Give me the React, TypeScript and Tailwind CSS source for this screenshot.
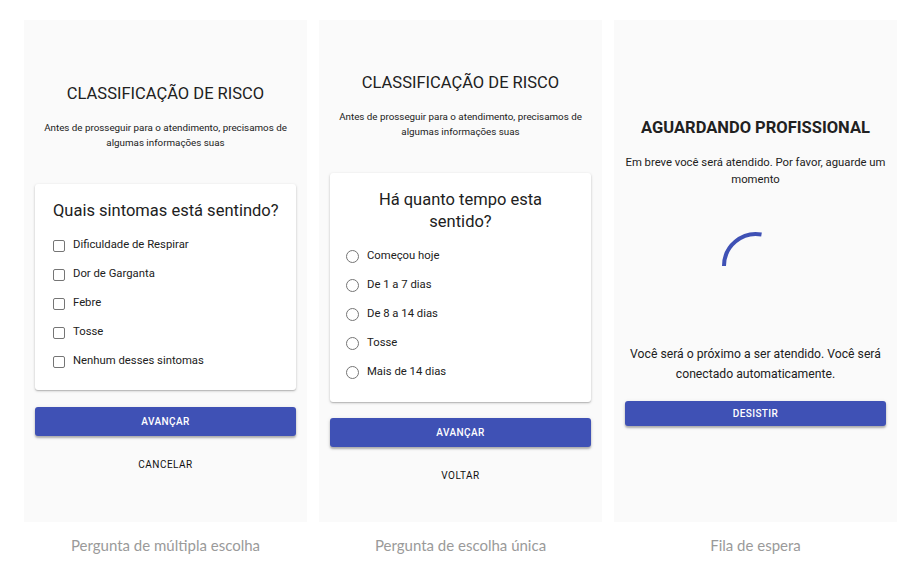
import React from "react";

const roboto = { fontFamily: "Roboto, 'Liberation Sans', sans-serif" };

function Checkbox() {
  return <span className="w-3 h-3 rounded-[2px] border-[1.5px] border-[#757575] shrink-0" />;
}

function Radio() {
  return <span className="w-[13px] h-[13px] rounded-full border-[1.5px] border-[#757575] shrink-0" />;
}

function Option({ label, kind }: { label: string; kind: "check" | "radio" }) {
  return (
    <div className="h-[29px] flex items-center gap-[8px]">
      {kind === "check" ? <Checkbox /> : <Radio />}
      <span className="text-[11.3px] text-[#212121]">{label}</span>
    </div>
  );
}

function Header() {
  return (
    <>
      <h1 className="text-[16.5px] leading-5 text-[#212121] text-center">
        CLASSIFICAÇÃO DE RISCO
      </h1>
      <p className="mt-[16px] text-[9.8px] leading-[15px] text-[#212121] text-center whitespace-nowrap">
        Antes de prosseguir para o atendimento, precisamos de
        <br />
        algumas informações suas
      </p>
    </>
  );
}

function PrimaryButton({ label, h = "h-[29px]" }: { label: string; h?: string }) {
  return (
    <button
      className={`${h} w-full rounded-[3px] bg-[#3f51b5] text-white text-[10px] font-medium tracking-[0.04em] shadow-[0_2px_2px_rgba(0,0,0,0.25),0_1px_4px_rgba(0,0,0,0.12)]`}
    >
      {label}
    </button>
  );
}

function TextButton({ label }: { label: string }) {
  return (
    <div className="mt-[14px] h-[29px] flex items-center justify-center text-[10px] tracking-[0.05em] text-[#111]">
      {label}
    </div>
  );
}

function Caption({ text }: { text: string }) {
  return (
    <div
      className="h-[46px] flex items-center justify-center text-[15px] text-[#9a9a9a]"
      style={{ fontFamily: "Lato, 'Open Sans', sans-serif" }}
    >
      {text}
    </div>
  );
}

const card =
  "bg-white rounded-[3px] shadow-[0_1px_3px_rgba(0,0,0,0.2),0_1px_1px_rgba(0,0,0,0.14)]";

function MultipleChoice() {
  const options = ["Dificuldade de Respirar", "Dor de Garganta", "Febre", "Tosse", "Nenhum desses sintomas"];
  return (
    <div className="flex flex-col">
      <div className="h-[502px] bg-[#fafafa] px-[11px] flex flex-col">
        <div className="mt-[64px]">
          <Header />
        </div>
        <div className={`mt-[34px] ${card} px-[18px] pt-[15px] pb-[14px]`}>
          <h2 className="text-[16.5px] leading-6 text-[#212121] text-center whitespace-nowrap">
            Quais sintomas está sentindo?
          </h2>
          <div className="mt-[8px]">
            {options.map((o) => (
              <Option key={o} label={o} kind="check" />
            ))}
          </div>
        </div>
        <div className="mt-[17px]">
          <PrimaryButton label="AVANÇAR" />
        </div>
        <TextButton label="CANCELAR" />
      </div>
      <Caption text="Pergunta de múltipla escolha" />
    </div>
  );
}

function SingleChoice() {
  const options = ["Começou hoje", "De 1 a 7 dias", "De 8 a 14 dias", "Tosse", "Mais de 14 dias"];
  return (
    <div className="flex flex-col">
      <div className="h-[502px] bg-[#fafafa] px-[11px] flex flex-col">
        <div className="mt-[53px]">
          <Header />
        </div>
        <div className={`mt-[34px] ${card} px-[16px] pt-[16px] pb-[15px]`}>
          <h2 className="text-[16.5px] leading-[22px] text-[#212121] text-center">
            Há quanto tempo esta
            <br />
            sentido?
          </h2>
          <div className="mt-[9px]">
            {options.map((o) => (
              <Option key={o} label={o} kind="radio" />
            ))}
          </div>
        </div>
        <div className="mt-[16px]">
          <PrimaryButton label="AVANÇAR" />
        </div>
        <TextButton label="VOLTAR" />
      </div>
      <Caption text="Pergunta de escolha única" />
    </div>
  );
}

function Spinner() {
  // arc from 9 o'clock round to just past 12
  return (
    <svg width="70" height="70" viewBox="0 0 70 70">
      <path d="M 3 35 A 32 32 0 0 1 40.5 3.5" fill="none" stroke="#3f51b5" strokeWidth="4" />
    </svg>
  );
}

function Waiting() {
  return (
    <div className="flex flex-col">
      <div className="h-[502px] bg-[#fafafa] px-[11px] flex flex-col items-stretch">
        <h1 className="mt-[98px] text-[16.5px] leading-5 font-bold text-[#212121] text-center">
          AGUARDANDO PROFISSIONAL
        </h1>
        <p className="mt-[16px] text-[11.3px] leading-[17px] text-[#212121] text-center whitespace-nowrap">
          Em breve você será atendido. Por favor, aguarde um
          <br />
          momento
        </p>
        <div className="mt-[43px] flex justify-center">
          <Spinner />
        </div>
        <p className="mt-[43px] text-[12.2px] leading-5 text-[#212121] text-center whitespace-nowrap">
          Você será o próximo a ser atendido. Você será
          <br />
          conectado automaticamente.
        </p>
        <div className="mt-[16px]">
          <PrimaryButton label="DESISTIR" h="h-[25px]" />
        </div>
      </div>
      <Caption text="Fila de espera" />
    </div>
  );
}

export default function App() {
  return (
    <div className="w-[920px] h-[580px] bg-white pt-[20px] pl-[24px]" style={roboto}>
      <div className="grid grid-cols-[283px_283px_283px] gap-[12px]">
        <MultipleChoice />
        <SingleChoice />
        <Waiting />
      </div>
    </div>
  );
}
